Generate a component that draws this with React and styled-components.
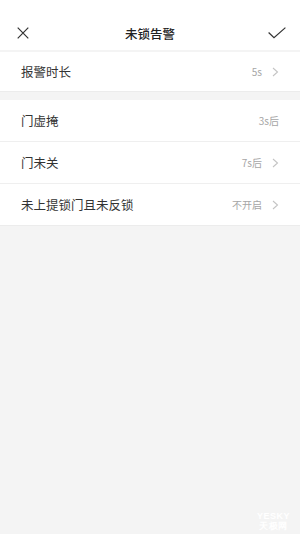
import React from "react";
import styled, { createGlobalStyle } from "styled-components";

const Global = createGlobalStyle`
  html, body { margin: 0; padding: 0; background: #f4f4f4; }
  body { font-family: "Noto Sans CJK SC", "Noto Sans", sans-serif; }
  #root { min-height: 534px; }
`;

const Page = styled.div`
  width: 300px;
  height: 534px;
  background: #f4f4f4;
  position: relative;
  overflow: hidden;
`;

const Header = styled.header`
  height: 34px;
  padding-top: 16px;
  background: #fff;
  display: grid;
  grid-template-columns: 50px 1fr 50px;
  align-items: center;
  margin-bottom: 2px;
`;

const IconBtn = styled.div`
  display: flex;
  align-items: center;
  justify-content: ${(p) => (p.$right ? "flex-end" : "flex-start")};
  padding: ${(p) => (p.$right ? "0 14px 0 0" : "0 0 0 17px")};
  color: #333;
`;

const Title = styled.h1`
  margin: 0;
  text-align: center;
  font-size: 12.5px;
  font-weight: 500;
  color: #222;
`;

const Group = styled.section`
  background: #fff;
  margin-bottom: ${(p) => p.$gap || 0}px;
  border-bottom: 1px solid #ececec;
`;

const Row = styled.div`
  height: ${(p) => p.$h || 41}px;
  display: flex;
  align-items: center;
  padding: 0 21px;
  position: relative;
  & + & {
    border-top: 1px solid #efefef;
  }
`;

const Label = styled.span`
  flex: 1;
  font-size: 12.5px;
  color: #333;
`;

const Value = styled.span`
  font-size: 10px;
  color: #a6a6a6;
`;

const Chevron = styled.svg`
  width: 7px;
  height: 10px;
  margin-left: 10px;
  flex: none;
`;

const Watermark = styled.div`
  position: absolute;
  right: 10px;
  bottom: 3px;
  color: #fff;
  font-family: "Liberation Sans", sans-serif;
  font-weight: 700;
  font-size: 9px;
  line-height: 10px;
  text-align: center;
  letter-spacing: 0.5px;
`;

const Arrow = () => (
  <Chevron viewBox="0 0 7 10">
    <path d="M1 1 L5.5 5 L1 9" fill="none" stroke="#c4c4c4" strokeWidth="1.1" />
  </Chevron>
);

const items = [
  { label: "门虚掩", value: "3s后", arrow: false, h: 41 },
  { label: "门未关", value: "7s后", arrow: true, h: 41 },
  { label: "未上提锁门且未反锁", value: "不开启", arrow: true, h: 41 },
];

export default function App() {
  return (
    <Page>
      <Global />
      <Header>
        <IconBtn>
          <svg width="12" height="12" viewBox="0 0 12 12">
            <path d="M0.7 0.7 L11.3 11.3 M11.3 0.7 L0.7 11.3" stroke="#333" strokeWidth="1.2" fill="none" />
          </svg>
        </IconBtn>
        <Title>未锁告警</Title>
        <IconBtn $right>
          <svg width="18" height="12" viewBox="0 0 18 12">
            <path d="M0.6 5.5 L6 10.8 L17.4 0.6" stroke="#333" strokeWidth="1.2" fill="none" />
          </svg>
        </IconBtn>
      </Header>
      <Group $gap={8}>
        <Row $h={39}>
          <Label>报警时长</Label>
          <Value>5s</Value>
          <Arrow />
        </Row>
      </Group>
      <Group>
        {items.map((it) => (
          <Row key={it.label} $h={it.h}>
            <Label>{it.label}</Label>
            <Value>{it.value}</Value>
            {it.arrow ? <Arrow /> : null}
          </Row>
        ))}
      </Group>
      <Watermark>
        <div>YESKY</div>
        <div>天极网</div>
      </Watermark>
    </Page>
  );
}
